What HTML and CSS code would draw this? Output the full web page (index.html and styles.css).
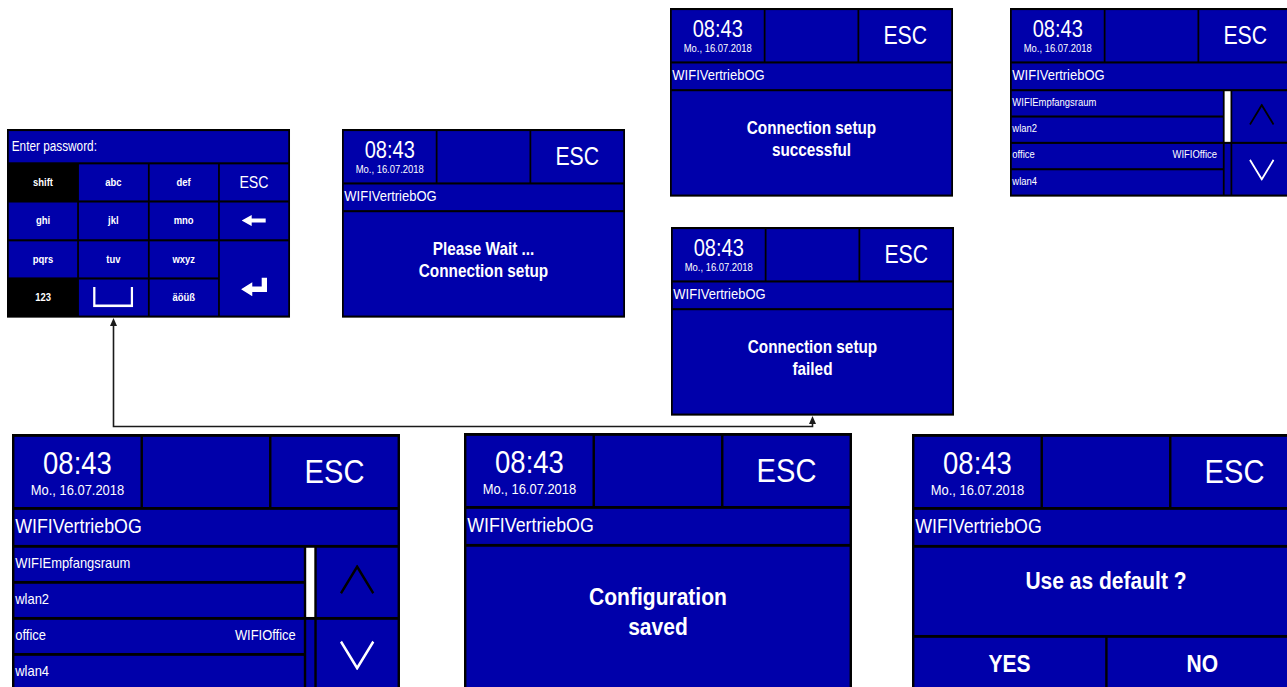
FILE: index.html
```html
<!DOCTYPE html>
<html lang="en">
<head>
<meta charset="utf-8">
<title>WIFI setup flow</title>
<link rel="stylesheet" href="styles.css">
</head>
<body>
<div class="canvas">

  <!-- Keyboard -->
  <div class="screen keyboard small pos-kbd">
    <div class="cell kb-title">Enter password:</div>
    <div class="keys">
      <div class="key enter">
        <svg width="44" height="27" viewBox="0 0 44 27"><polygon points="0,17 19,7 19,13 35,13 35,0 44,0 44,21 19,21 19,27" fill="#fff"/></svg>
      </div>
      <div class="key dark">shift</div>
      <div class="key">abc</div>
      <div class="key">def</div>
      <div class="key esc-key">ESC</div>
      <div class="key">ghi</div>
      <div class="key">jkl</div>
      <div class="key">mno</div>
      <div class="key">
        <svg width="41" height="16" viewBox="0 0 41 16"><polygon points="0,8 17,0 17,5 41,5 41,11 17,11 17,16" fill="#fff"/></svg>
      </div>
      <div class="key">pqrs</div>
      <div class="key">tuv</div>
      <div class="key">wxyz</div>
      <div class="key dark">123</div>
      <div class="key">
        <svg width="68" height="29" viewBox="0 0 68 29"><path d="M2 0 V27 H66 V0" fill="none" stroke="#fff" stroke-width="4"/></svg>
      </div>
      <div class="key">äöüß</div>
    </div>
  </div>

  <!-- Please wait -->
  <div class="screen small pos-wait">
    <div class="header">
      <div class="cell clock"><div class="time">08:43</div><div class="date">Mo., 16.07.2018</div></div>
      <div class="cell"></div>
      <div class="cell esc">ESC</div>
    </div>
    <div class="cell title">WIFIVertriebOG</div>
    <div class="cell message">Please Wait ...<br>Connection setup</div>
  </div>

  <!-- Success -->
  <div class="screen small pos-ok">
    <div class="header">
      <div class="cell clock"><div class="time">08:43</div><div class="date">Mo., 16.07.2018</div></div>
      <div class="cell"></div>
      <div class="cell esc">ESC</div>
    </div>
    <div class="cell title">WIFIVertriebOG</div>
    <div class="cell message">Connection setup<br>successful</div>
  </div>

  <!-- Small list -->
  <div class="screen small pos-list-s">
    <div class="header">
      <div class="cell clock"><div class="time">08:43</div><div class="date">Mo., 16.07.2018</div></div>
      <div class="cell"></div>
      <div class="cell esc">ESC</div>
    </div>
    <div class="cell title">WIFIVertriebOG</div>
    <div class="list-body">
      <div class="cell thumb"></div>
      <div class="cell track"></div>
      <div class="cell up">
        <svg width="44" height="32" viewBox="0 0 44 32"><polyline points="2,30 22,2 42,30" fill="none" stroke="#000" stroke-width="3"/></svg>
      </div>
      <div class="cell down">
        <svg width="44" height="32" viewBox="0 0 44 32"><polyline points="2,2 22,30 42,2" fill="none" stroke="#fff" stroke-width="3"/></svg>
      </div>
      <div class="cell row"><span>WIFIEmpfangsraum</span></div>
      <div class="cell row"><span>wlan2</span></div>
      <div class="cell row"><span>office</span><span>WIFIOffice</span></div>
      <div class="cell row"><span>wlan4</span></div>
    </div>
  </div>

  <!-- Failed -->
  <div class="screen small pos-fail">
    <div class="header">
      <div class="cell clock"><div class="time">08:43</div><div class="date">Mo., 16.07.2018</div></div>
      <div class="cell"></div>
      <div class="cell esc">ESC</div>
    </div>
    <div class="cell title">WIFIVertriebOG</div>
    <div class="cell message">Connection setup<br>failed</div>
  </div>

  <!-- Large list -->
  <div class="screen large pos-list-l">
    <div class="header">
      <div class="cell clock"><div class="time">08:43</div><div class="date">Mo., 16.07.2018</div></div>
      <div class="cell"></div>
      <div class="cell esc">ESC</div>
    </div>
    <div class="cell title">WIFIVertriebOG</div>
    <div class="list-body">
      <div class="cell thumb"></div>
      <div class="cell track"></div>
      <div class="cell up">
        <svg width="44" height="32" viewBox="0 0 44 32"><polyline points="2,30 22,2 42,30" fill="none" stroke="#000" stroke-width="3"/></svg>
      </div>
      <div class="cell down">
        <svg width="44" height="32" viewBox="0 0 44 32"><polyline points="2,2 22,30 42,2" fill="none" stroke="#fff" stroke-width="3"/></svg>
      </div>
      <div class="cell row"><span>WIFIEmpfangsraum</span></div>
      <div class="cell row"><span>wlan2</span></div>
      <div class="cell row"><span>office</span><span>WIFIOffice</span></div>
      <div class="cell row"><span>wlan4</span></div>
    </div>
  </div>

  <!-- Configuration saved -->
  <div class="screen large pos-saved">
    <div class="header">
      <div class="cell clock"><div class="time">08:43</div><div class="date">Mo., 16.07.2018</div></div>
      <div class="cell"></div>
      <div class="cell esc">ESC</div>
    </div>
    <div class="cell title">WIFIVertriebOG</div>
    <div class="cell message">Configuration<br>saved</div>
  </div>

  <!-- Use as default -->
  <div class="screen large pos-default">
    <div class="header">
      <div class="cell clock"><div class="time">08:43</div><div class="date">Mo., 16.07.2018</div></div>
      <div class="cell"></div>
      <div class="cell esc">ESC</div>
    </div>
    <div class="cell title">WIFIVertriebOG</div>
    <div class="confirm">
      <div class="cell question">Use as default ?</div>
      <div class="yesno">
        <div class="cell btn">YES</div>
        <div class="cell btn">NO</div>
      </div>
    </div>
  </div>

  <!-- Connectors -->
  <svg class="links" width="1287" height="687" viewBox="0 0 1287 687">
    <path d="M113.5 325 V426.5 H812.5 V423" fill="none" stroke="#1a1a1a" stroke-width="1.6"/>
    <polygon points="113.5,318 110,326 117,326" fill="#1a1a1a"/>
    <polygon points="812.5,416 809,424 816,424" fill="#1a1a1a"/>
  </svg>
</div>
</body>
</html>
```

FILE: styles.css
```css
* {
  box-sizing: border-box;
  margin: 0;
  padding: 0;
}

body {
  margin: 0;
  background: #fff;
  font-family: "Liberation Sans", Arial, sans-serif;
}

.canvas {
  position: relative;
  width: 1287px;
  height: 687px;
  overflow: hidden;
}

/* A screen is drawn at the device's native 480x272 and scaled onto the canvas */
.screen {
  position: absolute;
  width: 480px;
  height: 272px;
  padding: 3px;
  gap: 3px;
  display: grid;
  grid-template-rows: 74px 37px 1fr;
  background: #000;
  color: #fff;
  transform-origin: 0 0;
}

.small { transform: scale(0.5896, 0.6935); }
.large { transform: scale(0.8083, 0.948); }

.pos-kbd     { left: 7px;    top: 129px; }
.pos-wait    { left: 342px;  top: 129px; }
.pos-ok      { left: 670px;  top: 8px; }
.pos-list-s  { left: 1010px; top: 8px; }
.pos-fail    { left: 671px;  top: 227px; }
.pos-list-l  { left: 12px;   top: 434px; }
.pos-saved   { left: 464px;  top: 433px; }
.pos-default { left: 912px;  top: 434px; }

.cell {
  background: #0000aa;
}

.header {
  display: grid;
  grid-template-columns: repeat(3, 1fr);
  gap: 3px;
}

.clock {
  display: flex;
  flex-direction: column;
  align-items: center;
  justify-content: center;
}

.time {
  font-size: 34px;
  line-height: 34px;
}

.date {
  font-size: 16px;
  line-height: 18px;
  margin-top: 3px;
}

.esc {
  display: flex;
  align-items: center;
  justify-content: center;
  font-size: 36px;
}

.title {
  display: flex;
  align-items: center;
  padding: 0 0 4px 1px;
  font-size: 22px;
}

.message {
  display: flex;
  align-items: center;
  justify-content: center;
  text-align: center;
  font-size: 26px;
  font-weight: bold;
  line-height: 32px;
  padding-bottom: 14px;
}

/* Network list */
.list-body {
  display: grid;
  grid-template-columns: 1fr 10px 100px;
  grid-template-rows: repeat(4, 1fr);
  gap: 3px;
}

.row {
  grid-column: 1;
  display: flex;
  align-items: center;
  justify-content: space-between;
  padding: 0 10px 3px 1px;
  font-size: 16px;
}

.thumb {
  grid-column: 2;
  grid-row: 1 / 3;
  background: #fff;
}

.track {
  grid-column: 2;
  grid-row: 3 / 5;
}

.up, .down {
  grid-column: 3;
  display: flex;
  align-items: center;
  justify-content: center;
}

.up { grid-row: 1 / 3; padding-bottom: 6px; }
.down { grid-row: 3 / 5; }

/* Keyboard */
.keyboard {
  grid-template-rows: 45px 1fr;
}

.kb-title {
  display: flex;
  align-items: center;
  padding-left: 5px;
  font-size: 20px;
}

.keys {
  display: grid;
  grid-template-columns: repeat(4, 1fr);
  grid-template-rows: repeat(4, 1fr);
  gap: 3px;
}

.key {
  background: #0000aa;
  display: flex;
  align-items: center;
  justify-content: center;
  font-size: 16px;
  font-weight: bold;
}

.key.dark {
  background: #000;
}

.key.esc-key {
  font-size: 24px;
  font-weight: normal;
}

.key.enter {
  grid-column: 4;
  grid-row: 3 / 5;
  padding-top: 24px;
}

/* Confirm dialog */
.confirm {
  display: grid;
  grid-template-rows: 92px 1fr;
  gap: 3px;
}

.question {
  display: flex;
  align-items: center;
  justify-content: center;
  font-size: 26px;
  font-weight: bold;
  padding-bottom: 22px;
}

.yesno {
  display: grid;
  grid-template-columns: 1fr 1fr;
  gap: 3px;
}

.btn {
  display: flex;
  align-items: center;
  justify-content: center;
  font-size: 26px;
  font-weight: bold;
}

.links {
  position: absolute;
  left: 0;
  top: 0;
  pointer-events: none;
}
```
